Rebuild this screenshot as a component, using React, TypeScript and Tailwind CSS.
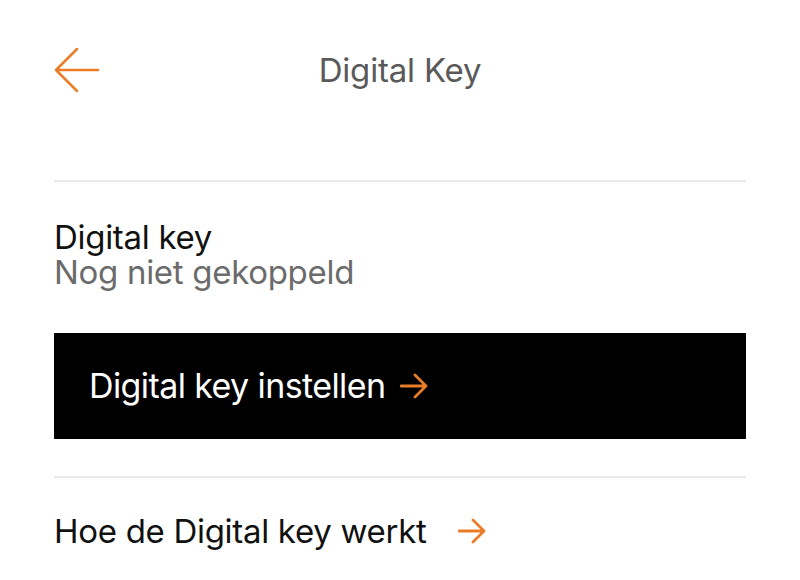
import React from "react"

const ORANGE = "#e97d27"

function ArrowRight({ className }: { className?: string }) {
  return (
    <svg className={className} width="28" height="26" viewBox="0 0 28 26" fill="none">
      <path d="M1 13H26M15 2L26 13L15 24" stroke={ORANGE} strokeWidth="2.8" strokeLinecap="round" strokeLinejoin="round" />
    </svg>
  )
}

function ArrowLeft() {
  return (
    <svg width="46" height="46" viewBox="0 0 46 46" fill="none">
      <path d="M44 23H2M23 2L2 23L23 44" stroke={ORANGE} strokeWidth="2.5" strokeLinecap="round" strokeLinejoin="round" />
    </svg>
  )
}

export default function App() {
  return (
    <div className="w-[800px] h-[580px] overflow-hidden bg-white px-[54px] font-['Inter','Liberation_Sans',sans-serif]">
      {/* Header */}
      <div className="relative flex h-[140px] items-center">
        <button className="flex items-center">
          <ArrowLeft />
        </button>
        <h1 className="absolute left-1/2 -translate-x-1/2 text-[33px] leading-none tracking-[-0.2px] text-[#5a5a5a]">
          Digital Key
        </h1>
      </div>

      <div className="mt-[40px] border-t-2 border-[#ebebeb]" />

      {/* Status */}
      <div className="pt-[38px]">
        <div className="text-[33px] leading-[35px] tracking-[-0.3px] text-[#111]">Digital key</div>
        <div className="text-[33px] leading-[35px] tracking-[-0.3px] text-[#6b6b6b]">Nog niet gekoppeld</div>
      </div>

      <button className="mt-[43px] flex h-[106px] w-full items-center bg-black px-[35px]">
        <span className="text-[34px] leading-none tracking-[-0.6px] text-white">Digital key instellen</span>
        <ArrowRight className="ml-[15px]" />
      </button>

      <div className="mt-[37px] border-t-2 border-[#ebebeb]" />

      <div className="flex h-[106px] items-center">
        <span className="text-[33px] leading-none tracking-[-0.3px] text-[#111]">Hoe de Digital key werkt</span>
        <ArrowRight className="ml-[32px]" />
      </div>
    </div>
  )
}
